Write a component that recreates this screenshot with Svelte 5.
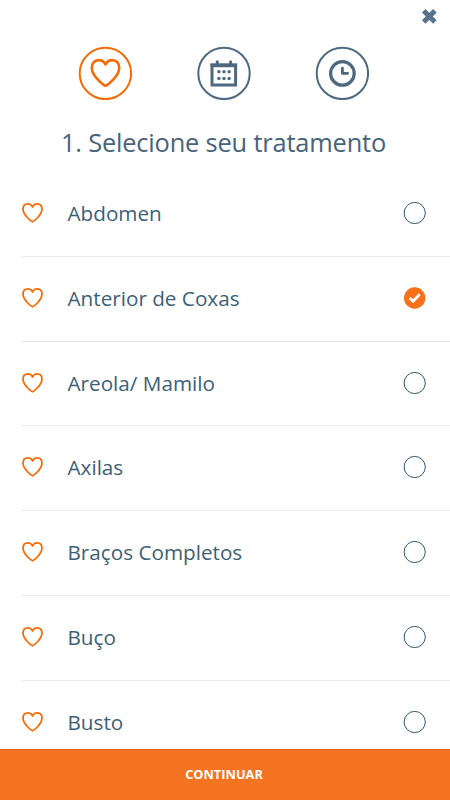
<script lang="ts">
    let treatments = [
        'Abdomen',
        'Anterior de Coxas',
        'Areola/ Mamilo',
        'Axilas',
        'Braços Completos',
        'Buço',
        'Busto',
    ];

    let selected = $state('Anterior de Coxas');
</script>

{#snippet heart()}
    <path d="M15 27.2C13 26.4 1.3 17.5 1.3 9.2C1.3 4.5 4.1 1.4 8.2 1.4C11.6 1.4 14 3.5 15 5.8C16 3.5 18.4 1.4 21.8 1.4C25.9 1.4 28.7 4.5 28.7 9.2C28.7 17.5 17 26.4 15 27.2Z" />
{/snippet}

{#snippet ring()}
    <circle cx="27" cy="27" r="25.7" fill="none" stroke="currentColor" stroke-width="2" />
{/snippet}

<div class="screen">
    <header>
        <button class="close" aria-label="Fechar">
            <svg width="18" height="18" viewBox="0 0 18 18">
                <path d="M3.7 3.7L14.9 14.9M14.9 3.7L3.7 14.9" />
            </svg>
        </button>
    </header>

    <nav>
        <svg class="step active" viewBox="-0.4 -0.4 54 54">
            {@render ring()}
            <g class="heart" transform="translate(12.1 12.3)">{@render heart()}</g>
        </svg>
        <svg class="step" viewBox="0 -0.4 54 54">
            {@render ring()}
            <g transform="translate(13 13)">
                <path d="M2 5.7H25.6V25.7H2Z" fill="none" stroke="currentColor" stroke-width="3" />
                <path d="M0.5 4.2H27.1V7.8H0.5Z" fill="currentColor" />
                <path d="M7.3 2.4V6M20.6 2.4V6" stroke="currentColor" stroke-width="3" stroke-linecap="round" />
                {#each [12.3, 19.1] as cy}
                    {#each [8.9, 14, 19.1] as cx}
                        <circle {cx} {cy} r="1.7" fill="currentColor" />
                    {/each}
                {/each}
            </g>
        </svg>
        <svg class="step" viewBox="-0.4 -0.4 54 54">
            {@render ring()}
            <g transform="translate(13 13)" fill="none" stroke="currentColor">
                <circle cx="14" cy="14" r="11.8" stroke-width="3.2" />
                <path d="M14 8.8V14H19.2" stroke-width="2.8" stroke-linecap="round" stroke-linejoin="round" />
            </g>
        </svg>
    </nav>

    <h1>1. Selecione seu tratamento</h1>

    <ul>
        {#each treatments as name}
            <li>
                <button class="row" onclick={() => (selected = name)}>
                    <svg class="heart" width="21" height="20" viewBox="0 0 30 29">{@render heart()}</svg>
                    <span class="name">{name}</span>
                    <svg class="radio" width="24" height="24" viewBox="0 0 24 24">
                        {#if selected === name}
                            <circle cx="11.7" cy="12" r="10.7" fill="#f87019" />
                            <path d="M6.7 12.1L10.1 15.3L16.7 8.3" fill="none" stroke="#fff" stroke-width="2.7" />
                        {:else}
                            <circle cx="11.7" cy="12" r="10.6" fill="none" stroke="#31566f" stroke-width="1" />
                        {/if}
                    </svg>
                </button>
            </li>
        {/each}
    </ul>

    <button class="continue">CONTINUAR</button>
</div>

<style>
    :global(body) {
        background: #fff;
    }

    .screen {
        display: flex;
        flex-direction: column;
        height: 100vh;
        overflow: hidden;
        font-family: "Open Sans", "Noto Sans", sans-serif;
        color: #46637a;
    }

    button {
        border: 0;
        padding: 0;
        background: none;
        font: inherit;
        color: inherit;
        cursor: pointer;
    }

    svg {
        display: block;
        flex-shrink: 0;
    }

    header {
        display: flex;
        justify-content: flex-end;
        flex-shrink: 0;
        height: 46px;
        padding: 7px 12px 0 0;
        box-sizing: border-box;
    }

    .close {
        width: 18px;
        height: 18px;
    }

    .close path {
        stroke: #57728a;
        stroke-width: 5;
    }

    nav {
        display: flex;
        justify-content: space-between;
        flex-shrink: 0;
        padding: 0 81px 0 78px;
    }

    .step {
        width: 54px;
        height: 54px;
        color: #4e697f;
    }

    .step.active {
        color: #f76b06;
    }

    .heart {
        fill: none;
        stroke: #f76b06;
        stroke-width: 2.6;
        stroke-linejoin: round;
    }

    h1 {
        flex-shrink: 0;
        height: 72px;
        margin: 0;
        padding: 24px 3px 0 0;
        box-sizing: border-box;
        font-size: 25.4px;
        line-height: 36px;
        font-weight: 400;
        letter-spacing: -0.17px;
        text-align: center;
        white-space: nowrap;
    }

    ul {
        flex: 1;
        min-height: 0;
        margin: 0;
        padding: 0 0 0 22px;
        overflow: hidden;
        list-style: none;
    }

    li {
        height: 84.75px;
        box-sizing: border-box;
        border-bottom: 1px solid #e9e9e9;
    }

    .row {
        display: flex;
        align-items: center;
        width: 100%;
        height: 100%;
        padding: 0 23.5px 1.4px 0;
        text-align: left;
    }

    .name {
        flex: 1;
        padding-left: 24.5px;
        font-size: 20.7px;
        color: #3c5f78;
    }

    .continue {
        flex-shrink: 0;
        height: 51px;
        padding: 0 2px 3px 0;
        border-top: 1px solid #dc6414;
        background: #f57421;
        color: #fff;
        font-size: 12.8px;
        font-weight: 700;
    }
</style>
